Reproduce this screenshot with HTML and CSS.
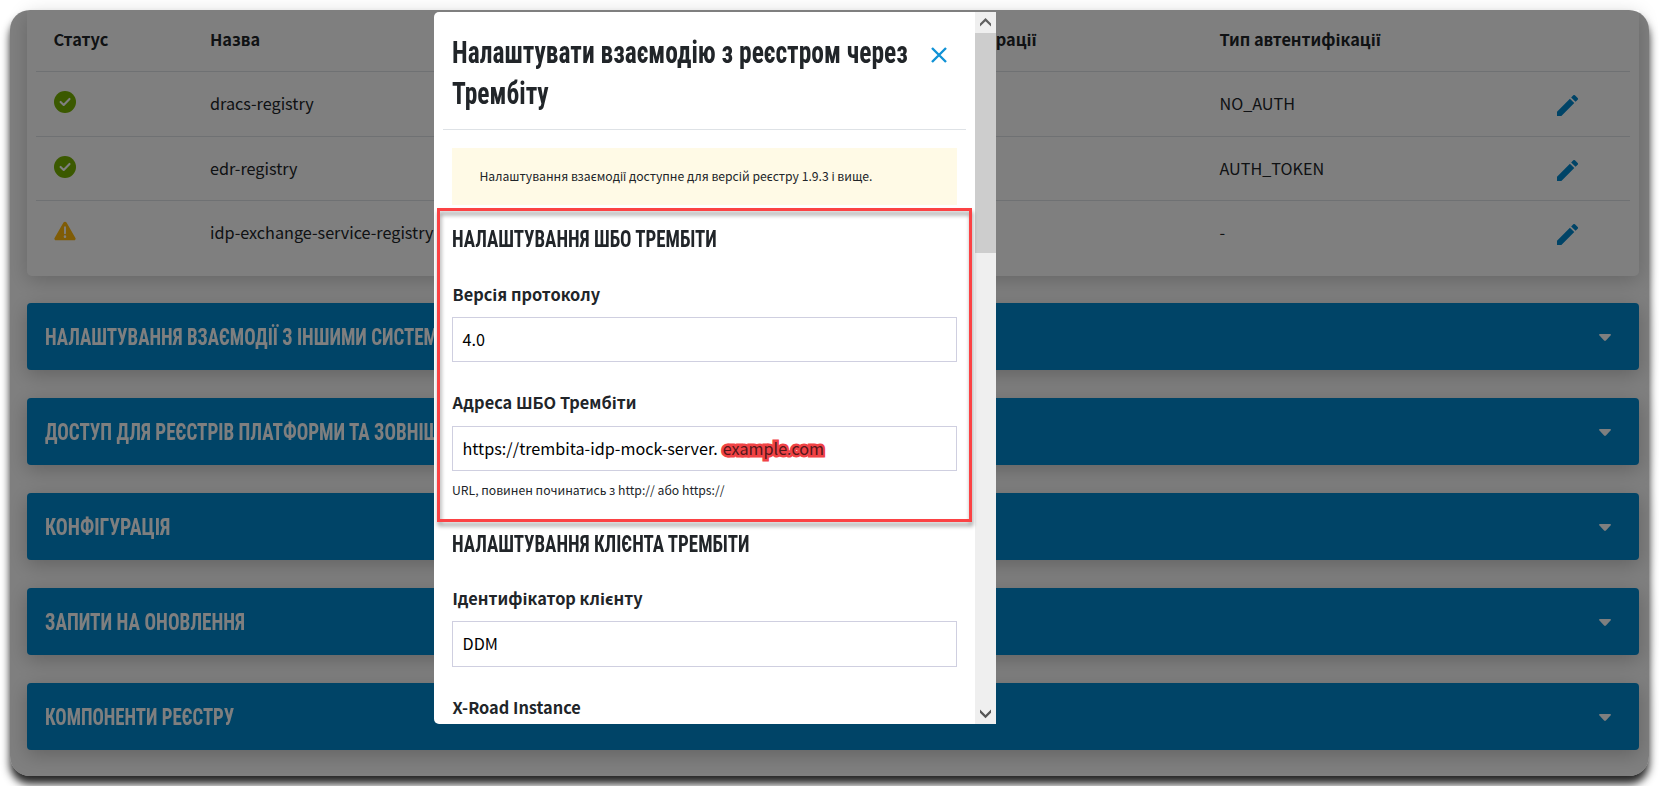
FILE: index.html
```
<!DOCTYPE html>
<html lang="uk">
<head>
<meta charset="utf-8">
<title>Реєстр</title>
<link rel="stylesheet" href="styles.css">
</head>
<body>
<svg class="defs" width="0" height="0">
  <symbol id="ok" viewBox="0 0 22 22"><circle cx="11" cy="11" r="11" fill="#76b200"/><path d="M6.6 10.9l3.1 3 5.8-6" fill="none" stroke="#fff" stroke-width="2.1" stroke-linecap="round" stroke-linejoin="round"/></symbol>
  <symbol id="warn" viewBox="0 0 23 20"><path d="M9.9 1.2a1.8 1.8 0 0 1 3.2 0l9.3 16a1.7 1.7 0 0 1-1.5 2.6H2.1A1.7 1.7 0 0 1 .6 17.2z" fill="#ffb400" fill-opacity=".95"/><path d="M11.5 6v6.4" stroke="#fff" stroke-width="2" stroke-linecap="round"/><circle cx="11.5" cy="15.9" r="1.35" fill="#fff"/></symbol>
  <symbol id="edit" viewBox="3 3 18 18"><path d="M3 17.25V21h3.75L17.81 9.94l-3.75-3.75L3 17.25zM20.71 7.04a1 1 0 0 0 0-1.41l-2.34-2.34a1 1 0 0 0-1.41 0l-1.83 1.83 3.75 3.75 1.83-1.83z" fill="#0088ce"/></symbol>
  <symbol id="caret" viewBox="0 0 12 7"><path d="M1 0h10q1 0 1 .9L6.9 6.5q-.9.9-1.8 0L0 .9Q0 0 1 0z" fill="#fff"/></symbol>
</svg>
<div class="frame">
  <section class="table">
    <div class="row head"><span></span><span>Статус</span><span>Назва</span><span class="proto">Протокол інтеграції</span><span>Тип автентифікації</span></div>
    <div class="row"><span></span><span><svg class="status"><use href="#ok"/></svg></span><span>dracs-registry</span><span></span><span>NO_AUTH</span><span><svg class="edit"><use href="#edit"/></svg></span></div>
    <div class="row"><span></span><span><svg class="status"><use href="#ok"/></svg></span><span>edr-registry</span><span></span><span>AUTH_TOKEN</span><span><svg class="edit"><use href="#edit"/></svg></span></div>
    <div class="row last"><span></span><span><svg class="status warn"><use href="#warn"/></svg></span><span>idp-exchange-service-registry</span><span></span><span>-</span><span><svg class="edit"><use href="#edit"/></svg></span></div>
  </section>
  <div class="panel systems"><h2>НАЛАШТУВАННЯ ВЗАЄМОДІЇ З ІНШИМИ СИСТЕМАМИ</h2><svg class="caret"><use href="#caret"/></svg></div>
  <div class="panel access"><h2>ДОСТУП ДЛЯ РЕЄСТРІВ ПЛАТФОРМИ ТА ЗОВНІШНІХ СИСТЕМ</h2><svg class="caret"><use href="#caret"/></svg></div>
  <div class="panel config"><h2>КОНФІГУРАЦІЯ</h2><svg class="caret"><use href="#caret"/></svg></div>
  <div class="panel updates"><h2>ЗАПИТИ НА ОНОВЛЕННЯ</h2><svg class="caret"><use href="#caret"/></svg></div>
  <div class="panel components"><h2>КОМПОНЕНТИ РЕЄСТРУ</h2><svg class="caret"><use href="#caret"/></svg></div>
  <div class="overlay"></div>
</div>
<div class="modal">
  <div class="content">
    <header>
      <h1>Налаштувати взаємодію з реєстром через<br>Трембіту</h1>
      <svg class="close" viewBox="0 0 16 16"><path d="M1 1l14 14M15 1L1 15" stroke="#1192d6" stroke-width="2.4"/></svg>
    </header>
    <div class="body">
      <p class="alert">Налаштування взаємодії доступне для версій реєстру 1.9.3 і вище.</p>
      <h3>НАЛАШТУВАННЯ ШБО ТРЕМБІТИ</h3>
      <label>Версія протоколу</label>
      <div class="input">4.0</div>
      <label>Адреса ШБО Трембіти</label>
      <div class="input address">https://trembita-idp-mock-server.<span class="masked">example.com</span></div>
      <p class="hint">URL, повинен починатись з http:// або https://</p>
      <h3 class="client">НАЛАШТУВАННЯ КЛІЄНТА ТРЕМБІТИ</h3>
      <label>Ідентифікатор клієнту</label>
      <div class="input tall">DDM</div>
      <label>X-Road Instance</label>
    </div>
  </div>
  <div class="scroll">
    <svg viewBox="0 0 21 21"><path d="M5 11.4l5.5-5.5 5.5 5.5v3.2L10.5 9.2 5 14.6z" fill="#606060"/></svg>
    <div class="thumb"></div>
    <svg class="down" viewBox="0 0 21 21"><path d="M5 9.8l5.5 5.5L16 9.8V6.6L10.5 12 5 6.6z" fill="#555"/></svg>
  </div>
  <div class="highlight"></div>
</div>
</body>
</html>
```
FILE: styles.css
```
* { box-sizing: border-box; }
body {
  margin: 0;
  height: 786px;
  padding: 10px;
  position: relative;
  overflow: hidden;
  background: #fff;
  color: #212529;
  font: 16.2px/28px "Noto Sans CJK SC", "Noto Sans", sans-serif;
}
.defs { position: absolute; }
h1, h2, h3, p { margin: 0; }
h1, h2, h3 {
  font-family: "Roboto Condensed", Roboto, sans-serif;
  font-weight: 700;
  white-space: nowrap;
  transform-origin: 0 50%;
}
.frame {
  position: relative;
  width: 1639px;
  height: 766px;
  padding: 0 10px 0 17px;
  border-radius: 20px;
  background: #fff;
  box-shadow: 0 8px 9px rgba(0, 0, 0, .85);
}
.overlay {
  position: absolute;
  inset: 0;
  border-radius: 20px;
  background: rgba(0, 0, 0, .5);
}
.table {
  height: 266px;
  margin-bottom: 27px;
  padding: 0 9px;
  border-radius: 0 0 5px 5px;
  box-shadow: 0 5px 20px rgba(0, 0, 0, .2);
}
.row {
  display: grid;
  grid-template-columns: 17.5px 156.5px 616.5px 393px 337.5px 1fr;
  height: 65px;
  padding-top: 17px;
  border-bottom: 1px solid #dee2e6;
}
.row span { height: 28px; white-space: nowrap; }
.row:nth-child(3) { height: 64px; }
.head { height: 62px; padding-top: 15px; font-weight: 700; font-size: 16.35px; }
.proto { justify-self: start; width: 210px; text-align: right; }
.last { border: 0; }
.status { display: block; width: 22px; height: 22px; margin-top: 1.5px; }
.warn { height: 20px; margin-top: 3px; }
.edit { display: block; width: 21px; height: 21px; margin-top: 6px; }
.panel {
  display: flex;
  align-items: center;
  justify-content: space-between;
  height: 67px;
  margin-bottom: 28px;
  padding: 0 28px 0 18px;
  border-radius: 4px;
  background: #0088ce;
  color: #fff;
  box-shadow: 0 5px 20px rgba(0, 0, 0, .23);
}
.panel h2 { font-size: 24px; line-height: 36px; }
.systems h2 { transform: scaleX(.789); }
.access h2 { transform: scaleX(.796); }
.config h2 { transform: scaleX(.824); }
.updates h2 { transform: scaleX(.801); }
.components h2 { transform: scaleX(.783); }
.caret { flex: none; width: 12px; height: 7px; margin-top: 2px; }
.modal {
  position: absolute;
  left: 434px;
  top: 12px;
  display: flex;
  width: 562px;
  height: 712px;
  border-radius: 5px 0 0 5px;
  background: #fff;
}
.content { width: 541px; height: 712px; overflow: hidden; }
header {
  display: flex;
  justify-content: space-between;
  height: 118px;
  margin: 0 9px;
  padding: 20px 19.5px 0 9px;
  border-bottom: 1px solid #dee2e6;
}
h1 { width: 400px; font-size: 31px; line-height: 41px; transform: scaleX(.822); }
.close { flex: none; width: 16px; height: 16px; margin-top: 15px; }
.body { padding: 18px 18px 0; }
.alert {
  height: 57px;
  margin-bottom: 16px;
  padding-left: 27.5px;
  background: #fffae6;
  font-size: 12.2px;
  line-height: 57px;
}
h3 { height: 36px; font-size: 24.3px; line-height: 36px; transform: scaleX(.779); }
h3.client { margin-top: 26px; }
label { display: block; height: 28px; margin: 26px 0 10px .5px; font-size: 16.35px; font-weight: 700; }
h3 + label { margin: 23px 0 9px .5px; }
.client + label { margin-top: 22px; }
.input {
  display: flex;
  height: 45px;
  padding: 0 9.5px;
  border: 1px solid #cfcfe0;
  color: #000;
  line-height: 42px;
}
.tall { height: 46px; }
.masked {
  margin-left: 5px;
  color: #55171a;
  -webkit-text-stroke: 5px #f04245;
  paint-order: stroke fill;
  stroke-linejoin: round;
}
.hint { height: 20px; margin-top: 9px; font-size: 12.2px; line-height: 20px; }
.scroll {
  display: flex;
  flex-direction: column;
  width: 21px;
  height: 712px;
  background: #efefef;
}
.scroll svg { display: block; width: 21px; height: 21px; }
.thumb { height: 220px; background: #cdcdcd; }
.scroll .down { margin-top: auto; }
.highlight {
  position: absolute;
  left: 3px;
  top: 196px;
  width: 535px;
  height: 314px;
  border: 3px solid #fb4244;
  filter: drop-shadow(1px 4px 2px rgba(0, 0, 0, .4));
}
```
